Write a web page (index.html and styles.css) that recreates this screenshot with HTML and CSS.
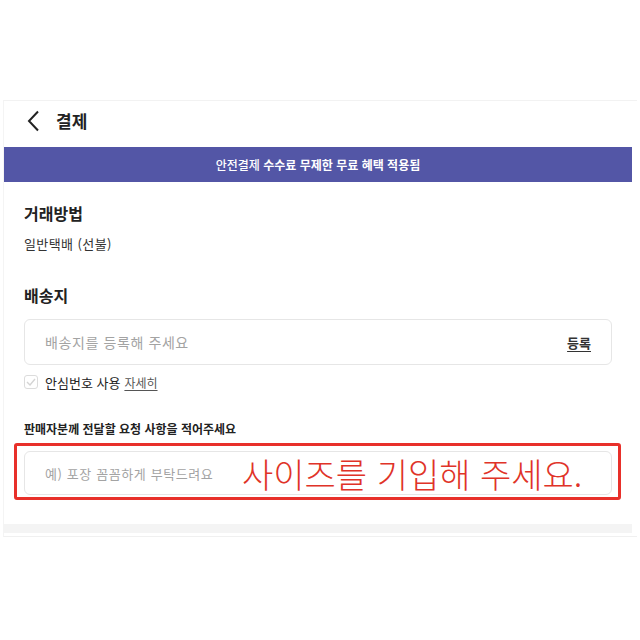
FILE: index.html
```html
<!DOCTYPE html>
<html lang="ko">
<head>
<meta charset="utf-8">
<link rel="stylesheet" href="styles.css">
</head>
<body>
<div class="frame">
  <header class="topbar">
    <svg class="back" width="14" height="22" viewBox="0 0 14 22"><path d="M12 1.5 L3 11 L12 20.5" fill="none" stroke="#222" stroke-width="2"/></svg>
    <h1 class="title">결제</h1>
  </header>
  <div class="banner"><span class="banner-text"><span class="light">안전결제</span> <b>수수료 무제한 무료 혜택 적용됨</b></span></div>
  <section class="section">
    <h2 class="heading">거래방법</h2>
    <p class="method">일반택배 (선불)</p>
  </section>
  <section class="section ship">
    <h2 class="heading">배송지</h2>
    <div class="field addr">
      <span class="placeholder addr-ph">배송지를 등록해 주세요</span>
      <span class="register">등록</span>
    </div>
    <div class="safe">
      <span class="check"><svg width="10" height="8" viewBox="0 0 10 8"><path d="M1 4 L4 7 L9 1" fill="none" stroke="#d4d4d4" stroke-width="1.4"/></svg></span>
      <span class="safe-label">안심번호 사용</span>
      <span class="more">자세히</span>
    </div>
    <h3 class="subheading">판매자분께 전달할 요청 사항을 적어주세요</h3>
    <div class="field request">
      <span class="placeholder req-ph">예) 포장 꼼꼼하게 부탁드려요</span>
      <span class="annot-text">사이즈를 기입해 주세요.</span>
      <span class="annot-box"></span>
    </div>
  </section>
  <div class="footer-bar"></div>
</div>
</body>
</html>
```
FILE: styles.css
```css
* { box-sizing: border-box; }
html, body { margin: 0; padding: 0; background: #fff; }
body { font-family: "Noto Sans CJK KR", "Noto Sans", sans-serif; color: #222; }
.frame {
  margin: 100px 0 0 3px;
  width: 634px;
  border-top: 1px solid #f2f2f2;
  border-left: 1px solid #f4f4f4;
  border-bottom: 1px solid #f0f0f0;
  padding-bottom: 3px;
}
.topbar { height: 46px; display: flex; align-items: center; padding: 0 0 6px 22px; }
.back { margin-right: 16px; }
.title { font-size: 17px; font-weight: 700; margin: 0; color: #222; line-height: 22px; }
.banner {
  width: 628px; height: 35px; background: #5356a6; color: #fff;
  font-size: 12px; display: flex; align-items: center; justify-content: center;
}
.banner .light { font-weight: 500; }
.banner b { font-weight: 700; }
.section { padding: 0 20px; width: 628px; }
.heading { font-size: 16px; font-weight: 700; margin: 19px 0 0; line-height: 24px; color: #222; }
.method { font-size: 13px; margin: 10px 0 0; line-height: 18px; color: #333; letter-spacing: 0.4px; }
.ship .heading { margin-top: 30px; }
.field {
  width: 588px; border: 1px solid #e6e6e6; border-radius: 6px;
  display: flex; align-items: center; padding: 0 20px; position: relative;
}
.addr { height: 46px; margin-top: 12px; justify-content: space-between; }
.placeholder { font-size: 13px; color: #a3a3a3; }
.addr-ph { font-size: 14px; letter-spacing: 0.6px; }
.req-ph { letter-spacing: 0.6px; }
.register { font-size: 13px; font-weight: 700; color: #333; text-decoration: underline; text-underline-offset: 3px; }
.safe { display: flex; align-items: center; margin-top: 9px; height: 16px; font-size: 13px; color: #222; }
.check {
  width: 14px; height: 14px; border: 1px solid #dcdcdc; border-radius: 3px;
  display: inline-flex; align-items: center; justify-content: center; margin-right: 7px;
}
.safe-label { margin-right: 4px; }
.more { color: #555; text-decoration: underline; text-underline-offset: 2px; font-size: 12px; }
.subheading { font-size: 12px; font-weight: 700; margin: 31px 0 0; line-height: 16px; color: #222; }
.request { height: 44px; margin-top: 14px; }
.annot-text {
  position: absolute; left: 217px; top: 0; height: 100%;
  display: flex; align-items: center;
  font-size: 34px; color: #e03328; font-weight: 300;
}
.annot-box {
  position: absolute; left: -11px; top: -9px; width: 607px; height: 57px;
  border: 3px solid #e8302a; border-radius: 3px; pointer-events: none;
}
.footer-bar { width: 628px; height: 9px; background: #f4f4f4; margin-top: 29px; }
```
